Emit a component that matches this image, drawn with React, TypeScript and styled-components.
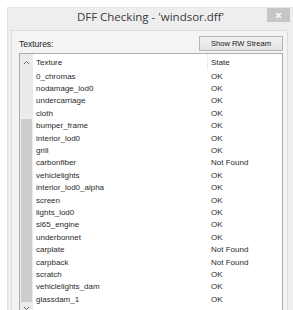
import React from "react";
import styled, { createGlobalStyle } from "styled-components";

const GlobalStyle = createGlobalStyle`
  html, body {
    margin: 0;
    padding: 0;
    background: #ffffff;
  }
  body {
    font-family: "Liberation Sans", Arial, sans-serif;
    overflow: hidden;
  }
`;

interface TextureRow {
  name: string;
  state: string;
}

const rows: TextureRow[] = [
  { name: "0_chromas", state: "OK" },
  { name: "nodamage_lod0", state: "OK" },
  { name: "undercarriage", state: "OK" },
  { name: "cloth", state: "OK" },
  { name: "bumper_frame", state: "OK" },
  { name: "interior_lod0", state: "OK" },
  { name: "grill", state: "OK" },
  { name: "carbonfiber", state: "Not Found" },
  { name: "vehiclelights", state: "OK" },
  { name: "interior_lod0_alpha", state: "OK" },
  { name: "screen", state: "OK" },
  { name: "lights_lod0", state: "OK" },
  { name: "sl65_engine", state: "OK" },
  { name: "underbonnet", state: "OK" },
  { name: "carplate", state: "Not Found" },
  { name: "carpback", state: "Not Found" },
  { name: "scratch", state: "OK" },
  { name: "vehiclelights_dam", state: "OK" },
  { name: "glassdam_1", state: "OK" },
];

const Page = styled.div`
  width: 293px;
  height: 310px;
  padding: 7px 0 0 7px;
  box-sizing: border-box;
`;

const Window = styled.div`
  height: 100%;
  background: #eeeeee;
  border-left: 1px solid #e2e2e2;
  border-top: 1px solid #e6e6e6;
  display: flex;
  flex-direction: column;
  box-sizing: border-box;
`;

const TitleBar = styled.div`
  display: grid;
  grid-template-columns: 1fr auto 1fr;
  align-items: start;
  height: 22px;
  flex-shrink: 0;
`;

const Title = styled.div`
  grid-column: 2;
  font-family: "Open Sans", "Noto Sans", sans-serif;
  font-size: 11.5px;
  color: #3a3a3a;
  line-height: 16px;
  padding-top: 1px;
  white-space: nowrap;
`;

const CloseButton = styled.div`
  grid-column: 3;
  justify-self: end;
  width: 23px;
  height: 14px;
  margin-right: 3px;
  background: #c6c6c6;
  display: flex;
  align-items: center;
  justify-content: center;
`;

const Panel = styled.div`
  flex: 1;
  margin: 0 5px 0 3px;
  background: #f4f4f4;
  border: 1px solid #dcdcdc;
  border-bottom: none;
  padding: 5px 4px 0 7px;
  display: flex;
  flex-direction: column;
  gap: 2px;
`;

const Toolbar = styled.div`
  display: flex;
  align-items: center;
  justify-content: space-between;
  height: 15px;
`;

const Label = styled.span`
  font-size: 8.5px;
  color: #222;
`;

const Button = styled.div`
  width: 82px;
  height: 13px;
  border: 1px solid #b4b4b4;
  background: linear-gradient(#f2f2f2, #e4e4e4);
  font-size: 7.6px;
  color: #222;
  display: flex;
  align-items: center;
  justify-content: center;
`;

const ListBox = styled.div`
  flex: 1;
  margin-right: 0;
  background: #ffffff;
  border: 1px solid #acacac;
  border-bottom: none;
  display: flex;
`;

const ScrollBar = styled.div`
  width: 13px;
  display: flex;
  flex-direction: column;
  background: #ebebeb;
`;

const Arrow = styled.div<{ $height: number }>`
  height: ${(p) => p.$height}px;
  display: flex;
  align-items: center;
  justify-content: center;
  flex-shrink: 0;
`;

const Track = styled.div<{ $before: number }>`
  flex: 1;
  padding: ${(p) => p.$before}px 1px 0;
  display: flex;
  flex-direction: column;
`;

const Thumb = styled.div<{ $size: number }>`
  height: ${(p) => p.$size}px;
  background: #cdcdcd;
`;

const Table = styled.div`
  flex: 1;
  display: flex;
  flex-direction: column;
`;

const Row = styled.div<{ $header?: boolean }>`
  display: grid;
  grid-template-columns: 175px 1fr;
  height: ${(p) => (p.$header ? 16 : 12.4)}px;
  align-items: center;
  font-size: 8px;
  color: ${(p) => (p.$header ? "#1e1e1e" : "#2a2a2a")};
`;

const Cell = styled.div<{ $divider?: boolean }>`
  padding-left: 3px;
  white-space: nowrap;
  height: 100%;
  display: flex;
  align-items: center;
  border-right: ${(p) => (p.$divider ? "1px solid #ececec" : "none")};
`;

const Chevron: React.FC<{ up?: boolean }> = ({ up }) => (
  <svg width="7" height="5" viewBox="0 0 7 5">
    <path
      d={up ? "M1 4 L3.5 1.5 L6 4" : "M1 1 L3.5 3.5 L6 1"}
      fill="none"
      stroke="#606060"
      strokeWidth="1"
    />
  </svg>
);

const App: React.FC = () => {
  return (
    <Page>
      <GlobalStyle />
      <Window>
        <TitleBar>
          <Title>DFF Checking - 'windsor.dff'</Title>
          <CloseButton>
            <svg width="7" height="7" viewBox="0 0 7 7">
              <path d="M1 1 L6 6 M6 1 L1 6" stroke="#ffffff" strokeWidth="1.3" />
            </svg>
          </CloseButton>
        </TitleBar>
        <Panel>
          <Toolbar>
            <Label>Textures:</Label>
            <Button>Show RW Stream</Button>
          </Toolbar>
          <ListBox>
            <ScrollBar>
              <Arrow $height={16}>
                <Chevron up />
              </Arrow>
              <Track $before={49}>
                <Thumb $size={183} />
              </Track>
              <Arrow $height={12}>
                <Chevron />
              </Arrow>
            </ScrollBar>
            <Table>
              <Row $header>
                <Cell $divider>Texture</Cell>
                <Cell>State</Cell>
              </Row>
              {rows.map((r) => (
                <Row key={r.name}>
                  <Cell>{r.name}</Cell>
                  <Cell>{r.state}</Cell>
                </Row>
              ))}
            </Table>
          </ListBox>
        </Panel>
      </Window>
    </Page>
  );
};

export default App;
